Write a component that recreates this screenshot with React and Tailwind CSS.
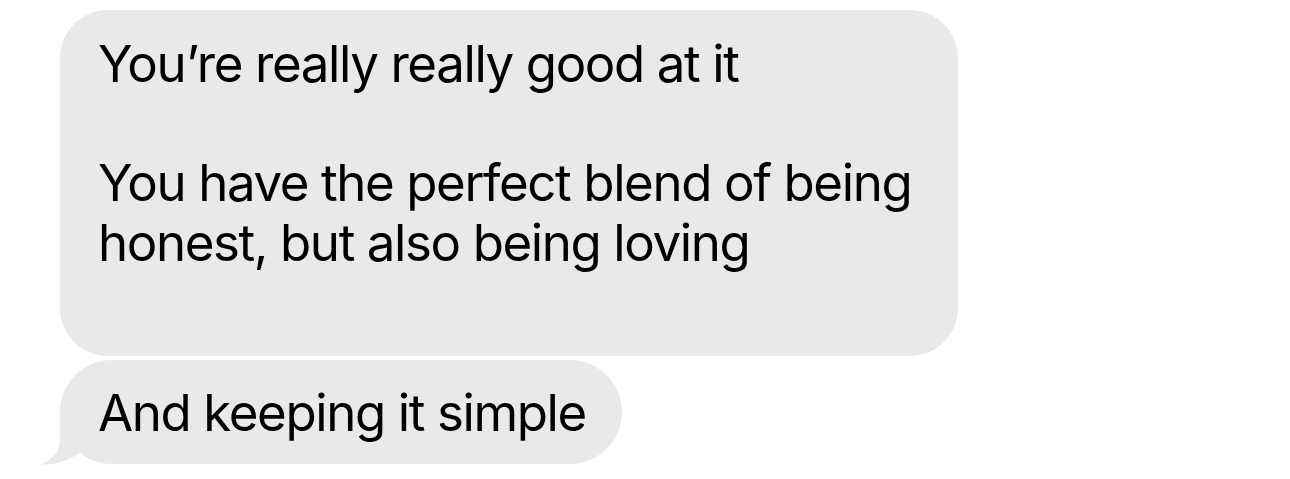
import React from "react";

function Tail() {
  return (
    <svg
      className="absolute -left-5 bottom-0 overflow-visible"
      width="40"
      height="50"
      viewBox="0 0 40 50"
    >
      <path
        d="M20 2 L20 25 C19.5 37 13 45.5 4 49.2 C2 50 2.5 50.6 5 50.6 C16 50.6 27 47 40 39 L40 2 Z"
        fill="#e9e9eb"
      />
    </svg>
  );
}

export default function App() {
  const font = { fontFamily: "Inter, 'Liberation Sans', sans-serif" };

  return (
    <div className="w-[1290px] h-[479px] bg-white overflow-hidden" style={font}>
      <div className="flex flex-col items-start gap-[4px] pt-[10px] pl-[60px]">
        {/* first bubble */}
        <div className="w-[898px] rounded-[48px] bg-[#e9e9eb] pl-[38px] pr-[20px] pt-[24px] pb-[23px] text-[51px] leading-[59.7px] tracking-[-1.4px] text-black whitespace-pre">
          {"You’re really really good at it\n\nYou have the perfect blend of being\nhonest, but also being loving\n\u00a0"}
        </div>

        {/* second bubble with tail */}
        <div className="relative rounded-full bg-[#e9e9eb] pl-[38px] pr-[36px] pt-[23px] pb-[21px] text-[51px] leading-[60px] tracking-[-1.4px] text-black">
          <Tail />
          <span className="relative">And keeping it simple</span>
        </div>
      </div>
    </div>
  );
}
